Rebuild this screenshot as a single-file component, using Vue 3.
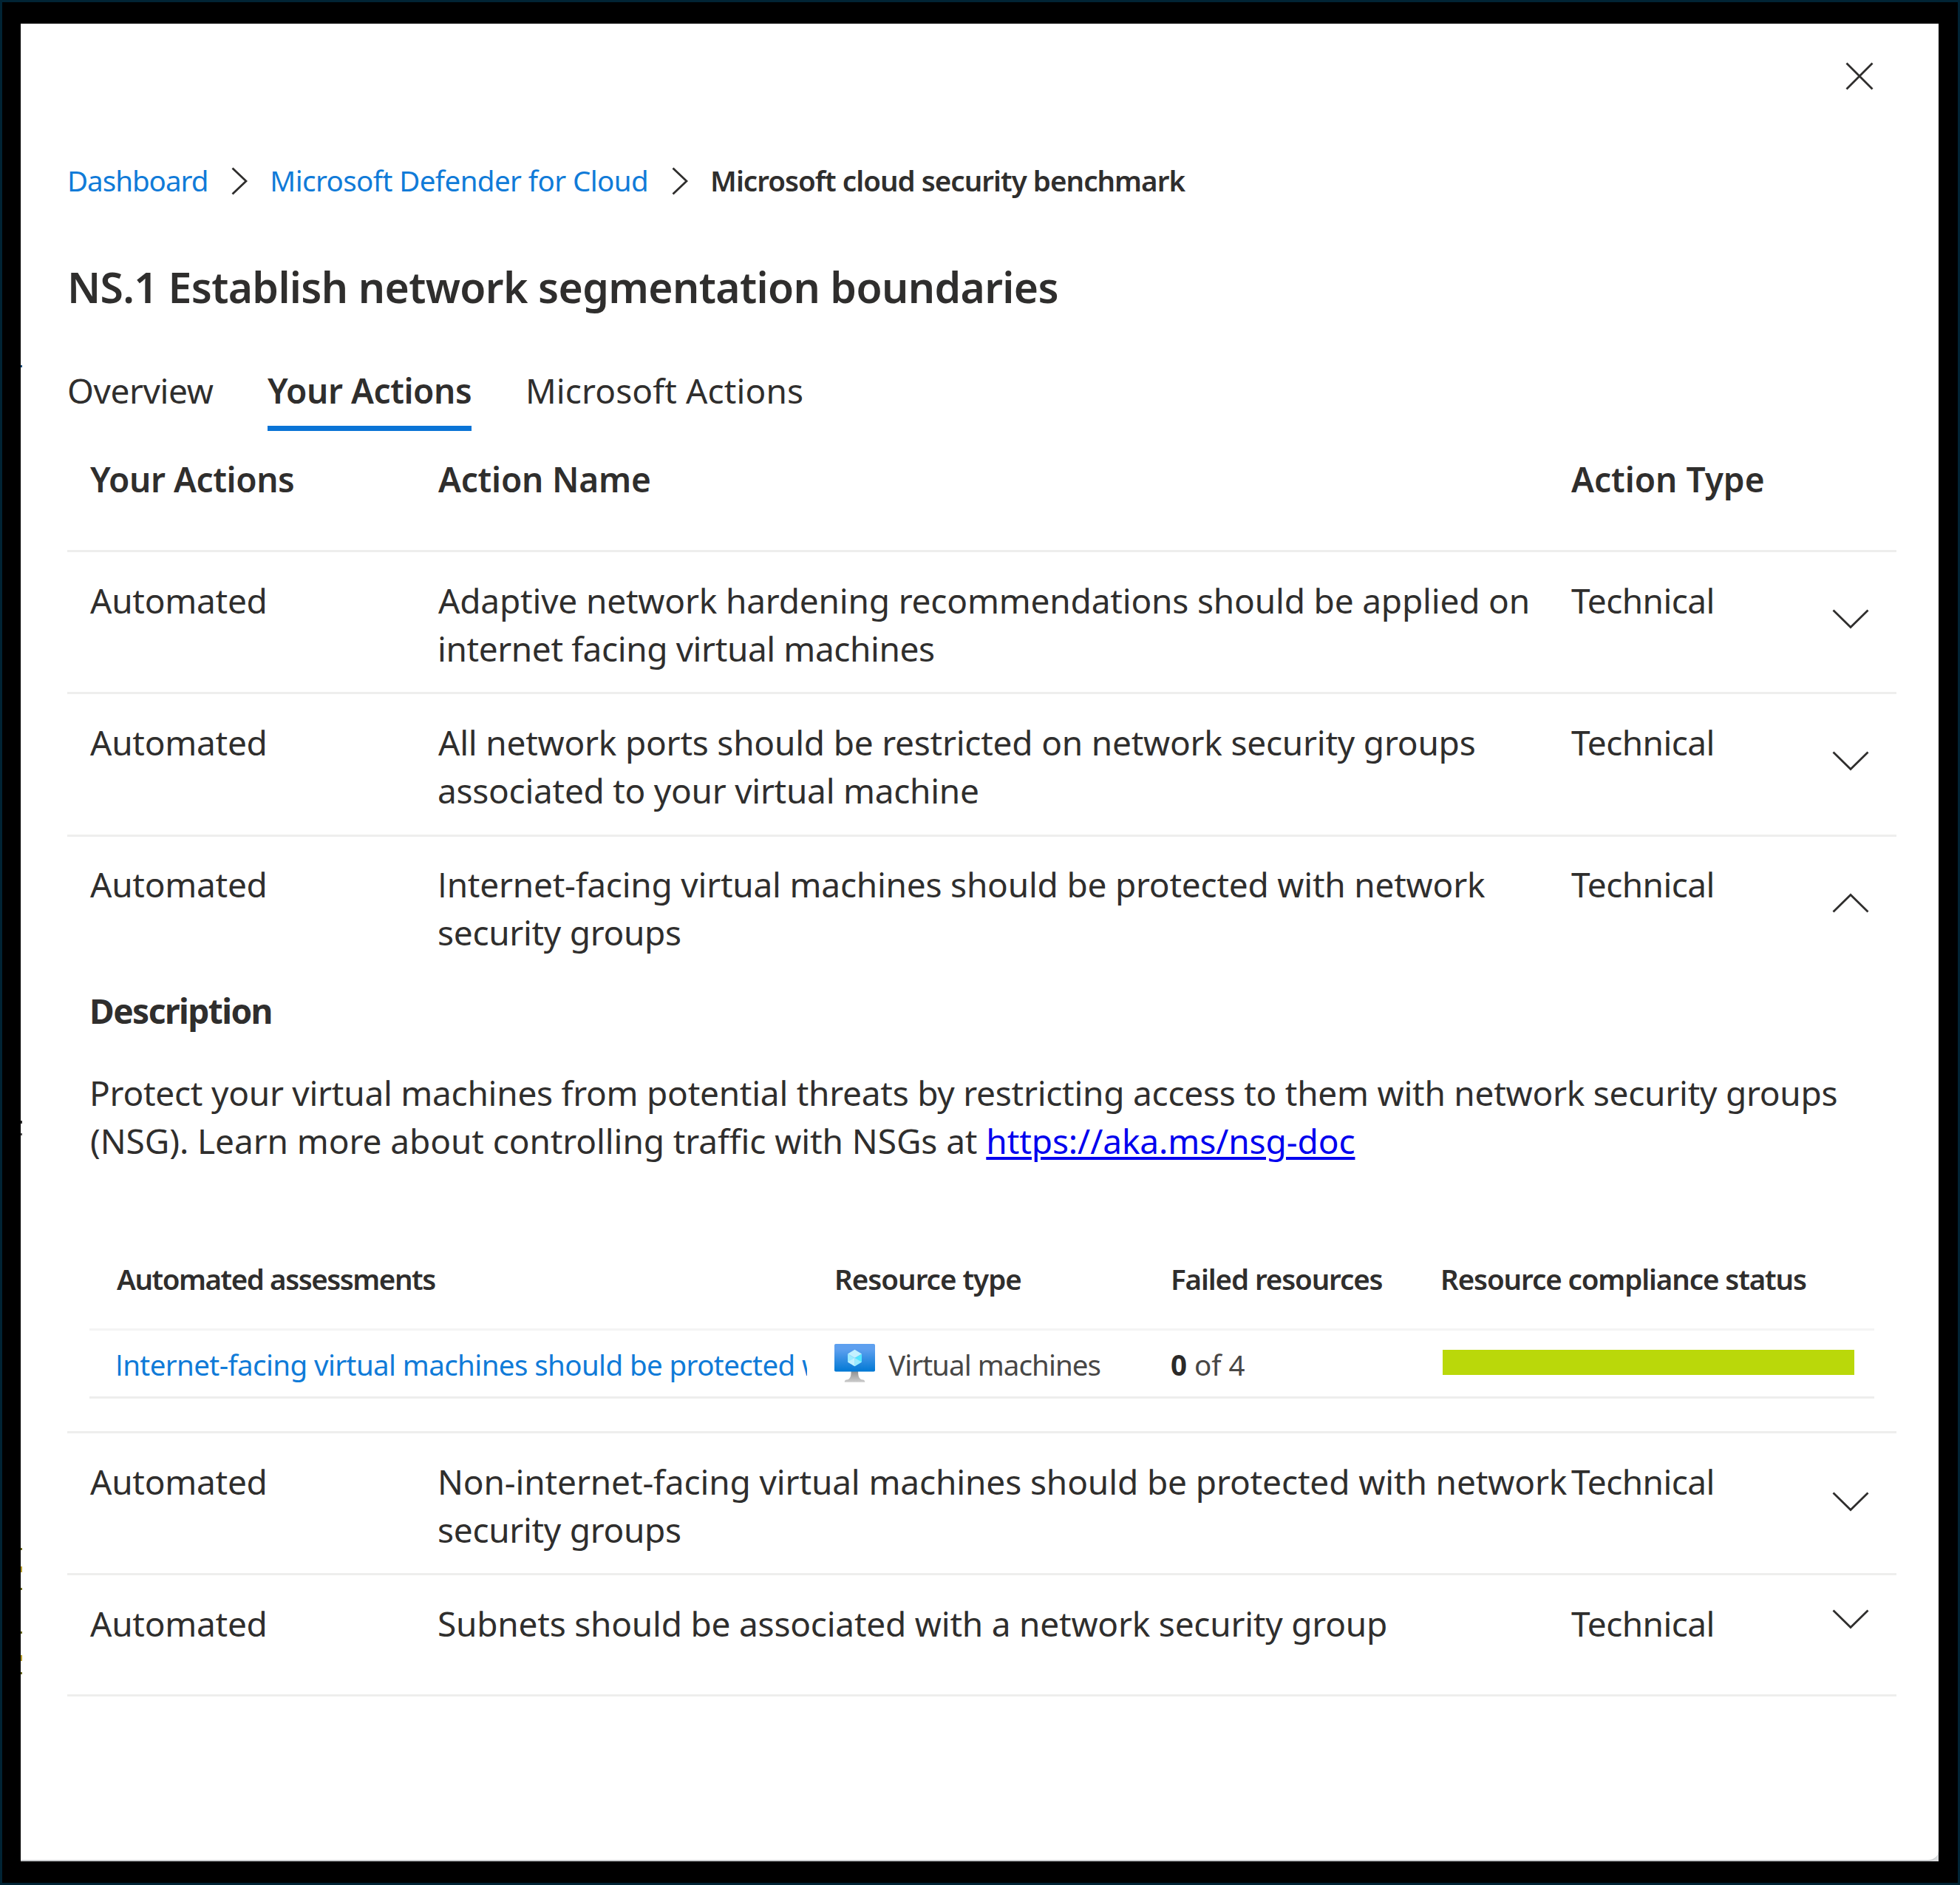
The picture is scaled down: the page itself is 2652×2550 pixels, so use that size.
<script setup>
const crumbs = [
  { text: 'Dashboard', ls: -1 },
  { text: 'Microsoft Defender for Cloud', ls: -0.58 },
]

const rows = [
  {
    cls: 'r1',
    lines: [
      { text: 'Adaptive network hardening recommendations should be applied on', ls: -0.18, a: true },
      { text: 'internet facing virtual machines', ls: -0.4 },
    ],
  },
  {
    cls: 'r2',
    lines: [
      { text: 'All network ports should be restricted on network security groups', ls: -0.22, a: true },
      { text: 'associated to your virtual machine', ls: -0.27 },
    ],
  },
  {
    cls: 'r3',
    open: true,
    lines: [
      { cap: 'I', text: 'nternet-facing virtual machines should be protected with network', ls: -0.22 },
      { text: 'security groups', ls: -0.3 },
    ],
  },
  {
    cls: 'r4',
    lines: [
      { text: 'Non-internet-facing virtual machines should be protected with network', ls: -0.12 },
      { text: 'security groups', ls: -0.3 },
    ],
  },
  {
    cls: 'r5',
    lines: [{ text: 'Subnets should be associated with a network security group', ls: -0.22 }],
  },
]

// slivers of the page behind the dialog, showing at its left edge
const slivers = [
  { y: 491, h: 3, c: '#1b4f80' },
  { y: 1513, h: 4, c: '#333' },
  { y: 1530, h: 3, c: '#555' },
  { y: 2091, h: 3, c: '#6b6b20' },
  { y: 2116, h: 8, c: '#b8a030' },
  { y: 2145, h: 3, c: '#6b6b20' },
  { y: 2204, h: 3, c: '#6b6b20' },
  { y: 2236, h: 8, c: '#b8a030' },
  { y: 2259, h: 3, c: '#6b6b20' },
]
</script>

<template>
  <div class="screen">
    <span v-for="s in slivers" :key="s.y" class="sliver" :style="{ top: s.y + 'px', height: s.h + 'px', background: s.c }"></span>
    <div class="backing">
      <main class="panel">
        <header class="top">
          <svg class="close" viewBox="0 0 38 38"><path d="M1.5 1.5l35 35M36.5 1.5l-35 35" /></svg>
        </header>

        <nav class="crumbs">
          <template v-for="c in crumbs" :key="c.text">
            <a class="crumb" :style="{ letterSpacing: c.ls + 'px' }">{{ c.text }}</a>
            <svg class="sep" viewBox="0 0 22 38"><path d="M1.5 1.5L20 19 1.5 36.5" /></svg>
          </template>
          <strong class="here">Microsoft cloud security benchmark</strong>
        </nav>

        <h1 class="title">NS.1 Establish network segmentation boundaries</h1>

        <div class="tabs">
          <span class="tab overview">Overview</span>
          <span class="tab active">Your Actions</span>
          <span class="tab ms">Microsoft Actions</span>
        </div>

        <section class="table">
          <div class="row head">
            <span class="c1">Your Actions</span>
            <span class="c2 ahead">Action Name</span>
            <span class="c3">Action Type</span>
          </div>

          <template v-for="r in rows" :key="r.cls">
            <div class="row" :class="r.cls">
              <span class="c1 auto">Automated</span>
              <div class="c2">
                <div v-for="l in r.lines" :key="l.text" :class="{ a: l.a }" :style="{ letterSpacing: l.ls + 'px' }"><span v-if="l.cap" class="cap">{{ l.cap }}</span>{{ l.text }}</div>
              </div>
              <span class="c3 tech">Technical</span>
              <svg class="chev" viewBox="0 0 50 27">
                <path :d="r.open ? 'M1.5 25.5L25 2.5 48.5 25.5' : 'M1.5 1.5L25 24.5 48.5 1.5'" />
              </svg>
            </div>

            <div v-if="r.open" class="detail">
              <h2 class="dh">Description</h2>
              <div class="para">
                <div class="p1">Protect your virtual machines from potential threats by restricting access to them with network security groups</div>
                <div class="p2">(NSG). Learn more about controlling traffic with NSGs at <a class="url">https://aka.ms/nsg-doc</a></div>
              </div>
              <div class="sub">
                <div class="srow shead">
                  <span class="s1 aa">Automated assessments</span>
                  <span class="s2 rt">Resource type</span>
                  <span class="s3 fr">Failed resources</span>
                  <span class="rs">Resource compliance status</span>
                </div>
                <div class="srow sdata">
                  <div class="s1 slink"><a class="clip"><span class="cap">I</span>nternet-facing virtual machines should be protected with</a></div>
                  <div class="s2 vm">
                    <svg class="vmicon" viewBox="0 0 18 17">
                      <defs>
                        <linearGradient id="scr" x1="0" y1="1" x2="0" y2="0">
                          <stop offset="0" stop-color="#0078d4" />
                          <stop offset=".82" stop-color="#5ea0ef" />
                        </linearGradient>
                        <linearGradient id="std" x1="0" y1="1" x2="0" y2="0">
                          <stop offset="0" stop-color="#ccc" />
                          <stop offset="1" stop-color="#8f8f8f" />
                        </linearGradient>
                      </defs>
                      <path d="M12.6 15.9C10.8 15.6 10.5 14.3 10.5 12H7.4c0 2.3-.3 3.6-2 3.9a1 1 0 0 0-.9 1h9a1 1 0 0 0-.9-1z" fill="url(#std)" />
                      <rect width="18" height="12.3" rx=".6" fill="url(#scr)" />
                      <path d="M12.1 4.4v3.6L9 9.9V6.2z" fill="#50e6ff" />
                      <path d="M12.1 4.4L9 6.2 5.9 4.4 9 2.5z" fill="#c3f1ff" />
                      <path d="M9 6.2v3.7L5.9 8V4.4z" fill="#9cebff" />
                      <path d="M5.9 8L9 6.2v3.7z" fill="#c3f1ff" />
                      <path d="M12.1 8L9 6.2v3.7z" fill="#9cebff" />
                    </svg>
                    <span class="vmt">Virtual machines</span>
                  </div>
                  <span class="s3 cnt"><b>0</b> of 4</span>
                  <div class="bar"></div>
                </div>
              </div>
            </div>
          </template>
        </section>
      </main>
    </div>
  </div>
</template>

<style>
body {
  background: #000;
}
</style>

<style scoped>
.screen {
  position: relative;
  box-sizing: border-box;
  width: 2652px;
  height: 2550px;
  padding: 29px 26px 29px 25px;
  border: 3px solid #012434;
  background: #000;
  font-family: "Noto Sans", "Open Sans", sans-serif;
  font-size: 46px;
  line-height: 65px;
  color: #2f2e2d;
  white-space: nowrap;
}
.sliver {
  position: absolute;
  left: 25px;
  width: 1.5px;
  z-index: 1;
}
.backing {
  width: 2595px;
  background: #dcdee0;
}
.panel {
  box-sizing: border-box;
  width: 2595px;
  height: 2486px;
  padding: 0 57px 0 63px;
  background: #fff;
  border-bottom: 2px solid #c9cccf;
  border-bottom-right-radius: 14px;
  overflow: hidden;
}
svg {
  display: block;
  flex: none;
  fill: none;
}
.close path, .sep path, .chev path {
  stroke: #2f2e2d;
  stroke-width: 2.8;
}
.top {
  display: flex;
  justify-content: flex-end;
  height: 186px;
  padding: 52px 31px 0 0;
  box-sizing: border-box;
}
.close {
  width: 38px;
  height: 38px;
}
.crumbs {
  display: flex;
  align-items: flex-start;
  height: 52px;
  font-size: 38.5px;
  line-height: 52px;
}
.crumb {
  color: #107bd8;
}
.sep {
  width: 22px;
  height: 38px;
  margin: 8px 30px 0 32px;
}
.here {
  font-weight: 600;
  letter-spacing: -0.96px;
}
.title {
  margin: 78px 0 0;
  font-size: 57px;
  line-height: 80px;
  font-weight: 600;
  letter-spacing: -0.64px;
}
.tabs {
  display: flex;
  height: 87px;
  margin-top: 68px;
}
.tab {
  box-sizing: border-box;
  height: 87px;
}
.overview {
  width: 271px;
  letter-spacing: -0.41px;
}
.active {
  width: 276px;
  margin: 0 73px 0 0;
  font-weight: 600;
  letter-spacing: -0.42px;
  border-bottom: 7px solid #0a74d6;
}
.ms {
  letter-spacing: 0.12px;
}
.row {
  display: flex;
  align-items: flex-start;
  box-sizing: border-box;
  height: 192px;
  padding: 33px 0 0 31px;
  border-bottom: 3px solid #eeeeed;
}
.c1 {
  width: 470px;
  flex: none;
}
.auto {
  letter-spacing: -0.25px;
}
.c2 {
  width: 1534px;
  flex: none;
}
.c3 {
  width: 353px;
  flex: none;
}
.a {
  padding-left: 1px;
}
.cap {
  font-family: "Open Sans", "Noto Sans", sans-serif;
}
.tech {
  letter-spacing: -0.56px;
}
.chev {
  width: 50px;
  height: 27px;
  margin-top: 44px;
}
.head {
  height: 164px;
  font-weight: 600;
}
.head .c1 {
  letter-spacing: -0.4px;
}
.ahead {
  box-sizing: border-box;
  padding-left: 1px;
  letter-spacing: -0.2px;
}
.r2 {
  height: 193px;
}
.r3 {
  height: 160px;
  padding-top: 32px;
  border-bottom: 0;
}
.r4 .chev {
  margin-top: 46px;
}
.r5 {
  height: 164px;
}
.r5 .chev {
  margin-top: 13px;
}
.detail {
  box-sizing: border-box;
  height: 647px;
  padding: 43px 30px 0 30px;
  border-bottom: 3px solid #eeeeed;
}
.dh {
  margin: 0 0 46px 0;
  font-size: 46px;
  line-height: 65px;
  font-weight: 700;
  letter-spacing: -1.52px;
}
.p1 {
  letter-spacing: -0.25px;
}
.p2 {
  margin-left: 1px;
  letter-spacing: -0.08px;
}
.url {
  color: #0000ee;
  text-decoration: underline;
  text-decoration-thickness: 4px;
  text-underline-offset: 4px;
}
.sub {
  margin-top: 127px;
  font-size: 38.5px;
  line-height: 52px;
}
.srow {
  display: flex;
  align-items: flex-start;
  box-sizing: border-box;
  border-bottom: 3px solid #f4f4f4;
}
.shead {
  height: 97px;
  padding: 1px 0 0 37px;
  font-weight: 600;
}
.aa {
  letter-spacing: -1.45px;
}
.rt {
  letter-spacing: -0.99px;
}
.fr {
  letter-spacing: -1.11px;
}
.rs {
  letter-spacing: -1.1px;
}
.s1 {
  width: 971px;
  flex: none;
}
.s2 {
  width: 455px;
  flex: none;
}
.s3 {
  width: 365px;
  flex: none;
}
.sdata {
  height: 92px;
  padding: 20px 0 0 37px;
  border-bottom-color: #eeeeed;
  color: #484746;
}
.clip {
  display: block;
  width: 936px;
  margin-left: -2px;
  overflow: hidden;
  color: #107bd8;
  letter-spacing: -0.6px;
}
.vm {
  display: flex;
  align-items: flex-start;
}
.vmicon {
  width: 55px;
  height: 52px;
  margin: -2px 18px 0 0;
}
.vmt {
  letter-spacing: -0.93px;
}
.cnt b {
  color: #2b2a29;
}
.bar {
  width: 557px;
  height: 34px;
  margin: 6px 0 0 3px;
  background: #bad80a;
}
</style>
